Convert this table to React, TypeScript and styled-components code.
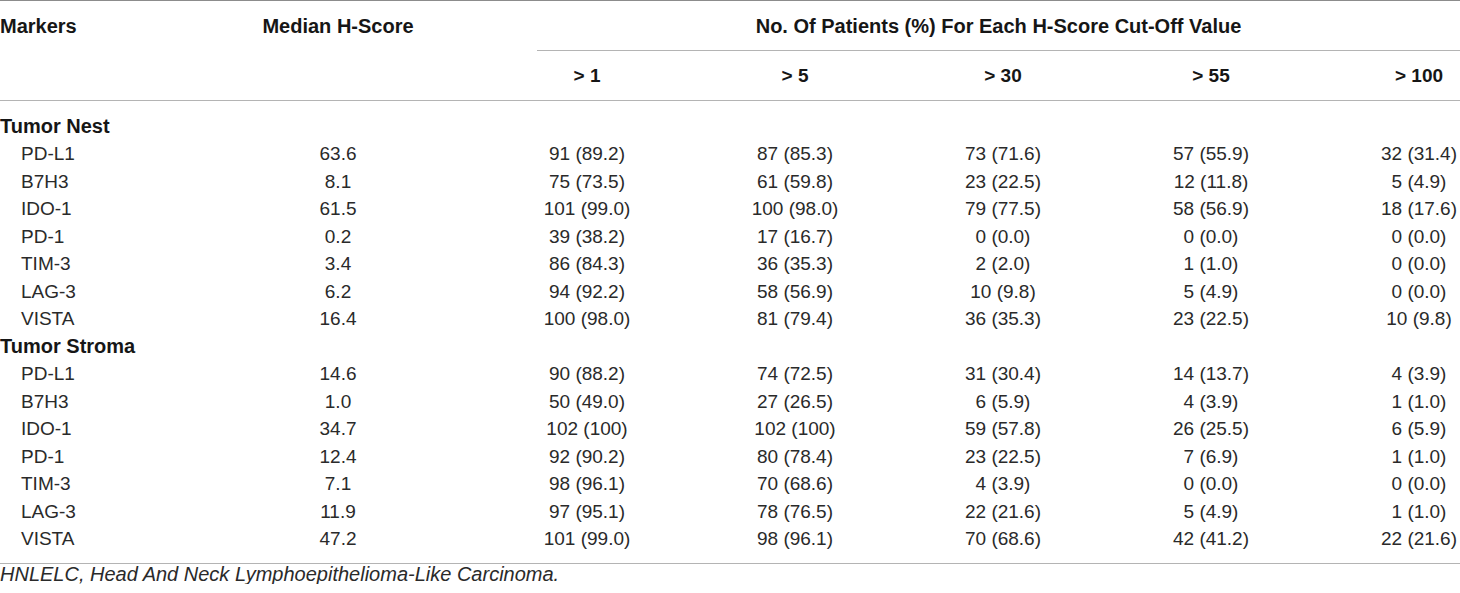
import React from "react";
import styled, { createGlobalStyle } from "styled-components";

const GlobalStyle = createGlobalStyle`
  html, body { margin: 0; padding: 0; background: #ffffff; }
  body { font-family: "Liberation Sans", Arial, sans-serif; color: #222; }
`;

const Wrapper = styled.div`
  width: 1460px;
`;

const COLS = "256px 164px repeat(5, 208px)";

const Header = styled.div`
  display: grid;
  grid-template-columns: ${COLS};
  grid-template-rows: auto auto;
  border-top: 1px solid #8c8c8c;
  border-bottom: 1px solid #b4b4b4;
`;

const HeadCell = styled.div<{ $align?: "left" | "center"; $row?: string }>`
  grid-row: ${(p) => p.$row || "auto"};
  font-weight: 700;
  font-size: 20px;
  line-height: 24px;
  color: #161616;
  padding-top: 13px;
  text-align: ${(p) => p.$align || "left"};
  white-space: nowrap;
`;

const GroupHead = styled.div`
  grid-column: 3 / 8;
  grid-row: 1;
  margin-left: 117px;
  font-weight: 700;
  font-size: 20px;
  line-height: 24px;
  color: #161616;
  padding: 13px 0 12px;
  text-align: center;
  border-bottom: 1px solid #b4b4b4;
  white-space: nowrap;
`;

const SubHead = styled.div`
  grid-row: 2;
  display: flex;
  justify-content: center;
  padding: 13px 0 12px 126px;
  font-weight: 700;
  font-size: 19px;
  line-height: 24px;
  color: #161616;
  white-space: nowrap;
`;

const Body = styled.div`
  display: grid;
  grid-template-columns: ${COLS};
  grid-auto-rows: 27.47px;
  padding: 12px 0 10px;
  border-bottom: 1px solid #b4b4b4;
`;

const Section = styled.div`
  grid-column: 1 / -1;
  font-weight: 700;
  font-size: 20px;
  line-height: 27.47px;
  color: #161616;
  white-space: nowrap;
`;

const Label = styled.div`
  padding-left: 21px;
  font-size: 19px;
  line-height: 27.47px;
  color: #2a2a2a;
  white-space: nowrap;
`;

const Median = styled.div`
  display: flex;
  justify-content: center;
  font-size: 19px;
  line-height: 27.47px;
  color: #2a2a2a;
  white-space: nowrap;
`;

const Value = styled.div`
  display: flex;
  justify-content: center;
  padding-left: 126px;
  font-size: 19px;
  line-height: 27.47px;
  color: #2a2a2a;
  white-space: nowrap;
`;

const Footnote = styled.div`
  font-style: italic;
  font-size: 20px;
  line-height: 20px;
  color: #2a2a2a;
  white-space: nowrap;
`;

type Row = [string, string, string, string, string, string, string];

const sections: { title: string; rows: Row[] }[] = [
  {
    title: "Tumor Nest",
    rows: [
      ["PD-L1", "63.6", "91 (89.2)", "87 (85.3)", "73 (71.6)", "57 (55.9)", "32 (31.4)"],
      ["B7H3", "8.1", "75 (73.5)", "61 (59.8)", "23 (22.5)", "12 (11.8)", "5 (4.9)"],
      ["IDO-1", "61.5", "101 (99.0)", "100 (98.0)", "79 (77.5)", "58 (56.9)", "18 (17.6)"],
      ["PD-1", "0.2", "39 (38.2)", "17 (16.7)", "0 (0.0)", "0 (0.0)", "0 (0.0)"],
      ["TIM-3", "3.4", "86 (84.3)", "36 (35.3)", "2 (2.0)", "1 (1.0)", "0 (0.0)"],
      ["LAG-3", "6.2", "94 (92.2)", "58 (56.9)", "10 (9.8)", "5 (4.9)", "0 (0.0)"],
      ["VISTA", "16.4", "100 (98.0)", "81 (79.4)", "36 (35.3)", "23 (22.5)", "10 (9.8)"],
    ],
  },
  {
    title: "Tumor Stroma",
    rows: [
      ["PD-L1", "14.6", "90 (88.2)", "74 (72.5)", "31 (30.4)", "14 (13.7)", "4 (3.9)"],
      ["B7H3", "1.0", "50 (49.0)", "27 (26.5)", "6 (5.9)", "4 (3.9)", "1 (1.0)"],
      ["IDO-1", "34.7", "102 (100)", "102 (100)", "59 (57.8)", "26 (25.5)", "6 (5.9)"],
      ["PD-1", "12.4", "92 (90.2)", "80 (78.4)", "23 (22.5)", "7 (6.9)", "1 (1.0)"],
      ["TIM-3", "7.1", "98 (96.1)", "70 (68.6)", "4 (3.9)", "0 (0.0)", "0 (0.0)"],
      ["LAG-3", "11.9", "97 (95.1)", "78 (76.5)", "22 (21.6)", "5 (4.9)", "1 (1.0)"],
      ["VISTA", "47.2", "101 (99.0)", "98 (96.1)", "70 (68.6)", "42 (41.2)", "22 (21.6)"],
    ],
  },
];

const cutoffs = ["> 1", "> 5", "> 30", "> 55", "> 100"];

export default function App() {
  return (
    <Wrapper>
      <GlobalStyle />
      <Header>
        <HeadCell $row="1 / 3">Markers</HeadCell>
        <HeadCell $row="1 / 3" $align="center">Median H-Score</HeadCell>
        <GroupHead>No. Of Patients (%) For Each H-Score Cut-Off Value</GroupHead>
        {cutoffs.map((c) => (
          <SubHead key={c}>{c}</SubHead>
        ))}
      </Header>
      <Body>
        {sections.map((s) => (
          <React.Fragment key={s.title}>
            <Section>{s.title}</Section>
            {s.rows.map((r) => (
              <React.Fragment key={s.title + r[0]}>
                <Label>{r[0]}</Label>
                <Median>{r[1]}</Median>
                {r.slice(2).map((v, i) => (
                  <Value key={i}>{v}</Value>
                ))}
              </React.Fragment>
            ))}
          </React.Fragment>
        ))}
      </Body>
      <Footnote>HNLELC, Head And Neck Lymphoepithelioma-Like Carcinoma.</Footnote>
    </Wrapper>
  );
}
